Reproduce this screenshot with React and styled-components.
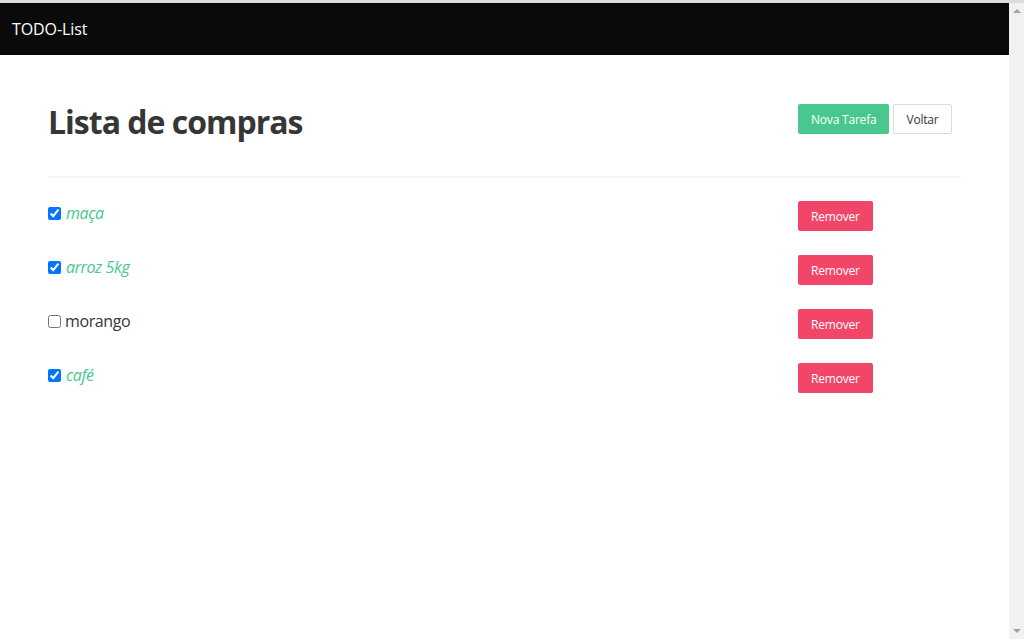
import React, { useState } from "react";
import styled, { createGlobalStyle } from "styled-components";

const GlobalStyle = createGlobalStyle`
    html, body {
        margin: 0;
        padding: 0;
    }
    body {
        border-top: 3px solid #dcdcdc;
        background: #fff;
        font-family: "Open Sans", "Noto Sans", sans-serif;
        color: #4a4a4a;
        font-size: 16px;
    }
`;

const Shell = styled.div`
    display: flex;
    height: calc(100vh - 3px);
    overflow: hidden;
`;

const Page = styled.div`
    flex: 1;
    min-width: 0;
`;

const ScrollTrack = styled.aside`
    width: 15px;
    flex-shrink: 0;
    background-color: #f1f1f1;
    display: flex;
    flex-direction: column;
    justify-content: space-between;
    align-items: center;
    padding: 6px 0;
    box-sizing: border-box;
`;

const Arrow = styled.span`
    width: 0;
    height: 0;
    border-left: 4px solid transparent;
    border-right: 4px solid transparent;
    ${(p) => (p.down ? "border-top" : "border-bottom")}: 4px solid #a3a3a3;
`;

const Navbar = styled.nav`
    height: 52px;
    background-color: #0a0a0a;
    display: flex;
    align-items: center;
`;

const Brand = styled.a`
    color: #fff;
    font-size: 16px;
    padding: 0 12px;
    letter-spacing: -0.1px;
    text-decoration: none;
`;

const Section = styled.section`
    padding: 49px 48px;
`;

const Row = styled.div`
    display: grid;
    grid-template-columns: 1fr 163px;
    column-gap: 24px;
    align-items: start;
    margin-bottom: ${(p) => p.spacing || 0}px;
`;

const Title = styled.h1`
    margin: 0;
    font-size: 32px;
    line-height: 36px;
    font-weight: 700;
    color: #363636;
    letter-spacing: -1px;
`;

const Buttons = styled.div`
    display: flex;
    gap: 4px;
`;

const Button = styled.button`
    height: 30px;
    padding: 0 12px;
    font-family: inherit;
    font-size: 12px;
    letter-spacing: -0.2px;
    border-radius: 2px;
    border: 1px solid ${(p) => (p.color ? "transparent" : "#dbdbdb")};
    background-color: ${(p) => p.color || "#fff"};
    color: ${(p) => (p.color ? "#fff" : "#363636")};
    cursor: pointer;
`;

const Divider = styled.hr`
    border: none;
    height: 2px;
    background-color: #f5f5f5;
    margin: 0 0 23px 0;
`;

const Item = styled(Row)`
    margin-bottom: 24px;
    align-items: center;
`;

const Label = styled.label`
    display: flex;
    align-items: center;
    font-size: 16px;
    line-height: 24px;
    letter-spacing: -0.4px;
    cursor: pointer;
    margin-top: -6px;
`;

const Check = styled.input`
    width: 13px;
    height: 13px;
    margin: 0 ${(p) => (p.checked ? 5 : 4)}px 0 0;
`;

const ItemText = styled.span`
    color: ${(p) => (p.done ? "#48c78e" : "#363636")};
    font-style: ${(p) => (p.done ? "italic" : "normal")};
`;

const initial = [
    { id: 1, name: "maça", done: true },
    { id: 2, name: "arroz 5kg", done: true },
    { id: 3, name: "morango", done: false },
    { id: 4, name: "café", done: true },
];

export default function App() {
    const [items, setItems] = useState(initial);

    const toggle = (id) => {
        setItems(items.map((it) => (it.id === id ? { ...it, done: !it.done } : it)));
    };

    return (
        <>
            <GlobalStyle />
            <Shell>
                <Page>
                    <Navbar>
                        <Brand href="#">TODO-List</Brand>
                    </Navbar>
                    <Section>
                        <Row spacing={36}>
                            <Title>Lista de compras</Title>
                            <Buttons>
                                <Button color="#48c78e">Nova Tarefa</Button>
                                <Button>Voltar</Button>
                            </Buttons>
                        </Row>
                        <Divider />
                        {items.map((it) => (
                            <Item key={it.id}>
                                <Label>
                                    <Check type="checkbox" checked={it.done} onChange={() => toggle(it.id)} />
                                    <ItemText done={it.done}>{it.name}</ItemText>
                                </Label>
                                <div>
                                    <Button color="#f14668">Remover</Button>
                                </div>
                            </Item>
                        ))}
                    </Section>
                </Page>
                <ScrollTrack>
                    <Arrow />
                    <Arrow down />
                </ScrollTrack>
            </Shell>
        </>
    );
}
